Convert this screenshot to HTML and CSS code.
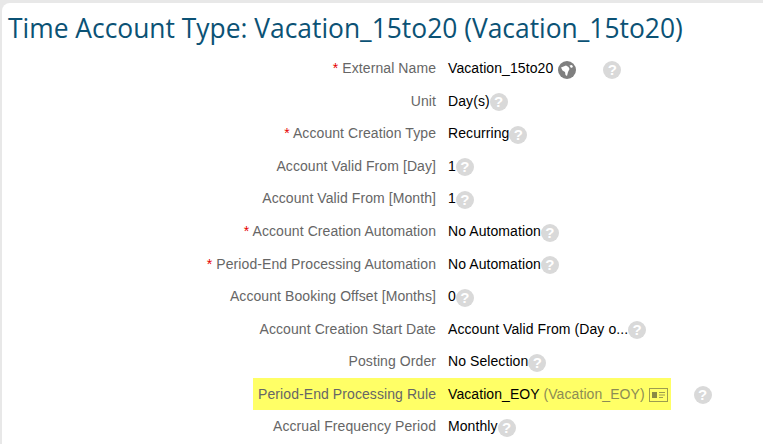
FILE: index.html
```html
<!DOCTYPE html>
<html lang="en">
<head>
<meta charset="UTF-8">
<title>Time Account Type</title>
<link rel="stylesheet" href="styles.css">
</head>
<body>
  <div class="page-card">
    <h1 class="page-title">Time Account Type: Vacation_15to20 (Vacation_15to20)</h1>
    <div class="field-list">
      <div class="field-row">
        <div class="field-label"><span class="req">*</span> External Name</div>
        <div class="field-value">Vacation_15to20
          <span class="globe-icon">
            <svg width="18" height="18" viewBox="0 0 18 18"><circle cx="9" cy="9" r="9" fill="#7f7f7f"/><path d="M3 6.5 L8 4.5 L10.5 6 L11.5 8 L10 11 L9 15 L7.5 14 L7 11 L4.5 9.5 Z M11.5 4.5 L14 4 L15 6 L13 7 Z" fill="#fff"/></svg>
          </span>
          <span class="help-icon help-far">?</span>
        </div>
      </div>
      <div class="field-row">
        <div class="field-label">Unit</div>
        <div class="field-value">Day(s)<span class="help-icon">?</span></div>
      </div>
      <div class="field-row">
        <div class="field-label"><span class="req">*</span> Account Creation Type</div>
        <div class="field-value">Recurring<span class="help-icon">?</span></div>
      </div>
      <div class="field-row">
        <div class="field-label">Account Valid From [Day]</div>
        <div class="field-value">1<span class="help-icon">?</span></div>
      </div>
      <div class="field-row">
        <div class="field-label">Account Valid From [Month]</div>
        <div class="field-value">1<span class="help-icon">?</span></div>
      </div>
      <div class="field-row">
        <div class="field-label"><span class="req">*</span> Account Creation Automation</div>
        <div class="field-value">No Automation<span class="help-icon">?</span></div>
      </div>
      <div class="field-row">
        <div class="field-label"><span class="req">*</span> Period-End Processing Automation</div>
        <div class="field-value">No Automation<span class="help-icon">?</span></div>
      </div>
      <div class="field-row">
        <div class="field-label">Account Booking Offset [Months]</div>
        <div class="field-value">0<span class="help-icon">?</span></div>
      </div>
      <div class="field-row">
        <div class="field-label">Account Creation Start Date</div>
        <div class="field-value">Account Valid From (Day o...<span class="help-icon">?</span></div>
      </div>
      <div class="field-row">
        <div class="field-label">Posting Order</div>
        <div class="field-value">No Selection<span class="help-icon">?</span></div>
      </div>
      <div class="field-row">
        <div class="field-label"><span class="mark mark-label">Period-End Processing Rule</span></div>
        <div class="field-value">
          <span class="mark mark-value">Vacation_EOY <span class="code-text">(Vacation_EOY)</span>
            <svg class="card-icon" width="19" height="14" viewBox="0 0 19 14"><rect x="0.5" y="0.5" width="18" height="13" fill="none" stroke="#9c9c50"/><rect x="3" y="4" width="5" height="6" fill="#8a8a45"/><path d="M10 4.5 H16 M10 7 H16 M10 9.5 H14" stroke="#9c9c50"/></svg>
          </span>
          <span class="help-icon help-rule">?</span>
        </div>
      </div>
      <div class="field-row">
        <div class="field-label">Accrual Frequency Period</div>
        <div class="field-value">Monthly<span class="help-icon">?</span></div>
      </div>
    </div>
  </div>
</body>
</html>
```

FILE: styles.css
```css
html, body {
  height: 100%;
}

body {
  margin: 0;
  padding: 3px 0 0 2px;
  box-sizing: border-box;
  background: #e8e8e8;
  font-family: "Liberation Sans", Arial, sans-serif;
  font-size: 14px;
  overflow: hidden;
}

.page-card {
  height: 100%;
  padding: 0 0 0 6px;
  background: #fff;
  border-radius: 8px 0 0 0;
}

.page-title {
  margin: 0;
  padding-top: 7px;
  height: 49px;
  font-family: "Open Sans", sans-serif;
  font-size: 26.4px;
  font-weight: 400;
  line-height: 36px;
  color: #0b5275;
  box-sizing: border-box;
  white-space: nowrap;
}

.field-list {
  display: flex;
  flex-direction: column;
}

.field-row {
  display: flex;
  align-items: center;
  height: 32.55px;
  flex-shrink: 0;
  letter-spacing: 0.08px;
}

.field-label {
  width: 428px;
  flex-shrink: 0;
  text-align: right;
  color: #666;
}

.field-value {
  display: flex;
  align-items: center;
  margin-left: 12px;
  color: #000;
  white-space: nowrap;
}

.req {
  color: #e60000;
}

.help-icon {
  display: inline-block;
  width: 18px;
  height: 18px;
  margin-top: 3px;
  border-radius: 50%;
  background: #d9d9d9;
  color: #fff;
  font-size: 15px;
  font-weight: bold;
  line-height: 18px;
  text-align: center;
}

.help-far {
  margin-left: 27px;
}

.help-rule {
  margin-left: 23px;
}

.globe-icon {
  display: inline-flex;
  margin: 3px 0 0 5px;
}

.mark {
  background: #ffff66;
}

.mark-label {
  display: inline-block;
  line-height: 32px;
  padding: 0 12px 0 5px;
  margin-right: -12px;
}

.mark-value {
  display: flex;
  align-items: center;
  height: 32px;
  margin-left: -12px;
  padding: 0 3px 0 12px;
  white-space: pre;
}

.code-text {
  color: #8c8c55;
}

.card-icon {
  margin: 3px 0 0 4px;
}
```
